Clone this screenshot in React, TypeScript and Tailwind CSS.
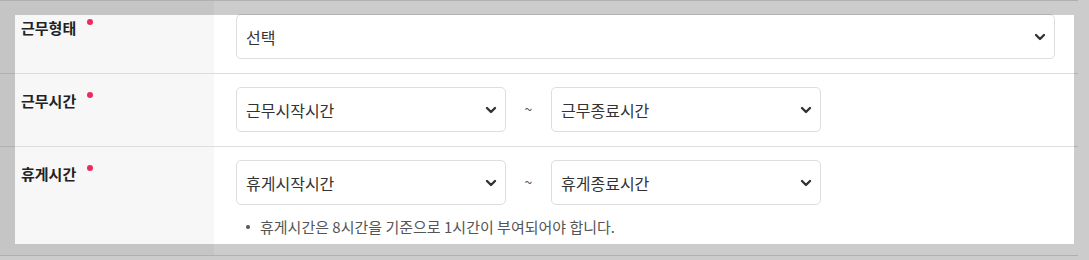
const font = "font-['Noto_Sans_CJK_KR','Noto_Sans',sans-serif]";

function Chevron() {
  return (
    <svg width="12" height="8" viewBox="0 0 12 8" className="shrink-0">
      <path d="M2 2 L6 6 L10 2" fill="none" stroke="#333" strokeWidth="2.4" strokeLinecap="round" strokeLinejoin="round" />
    </svg>
  );
}

function FakeSelect({ label, className }: { label: string; className: string }) {
  return (
    <div className={`h-[45px] flex items-center justify-between pl-[9px] pr-[8px] border border-[#dddddd] rounded-[5px] bg-white text-[16px] text-[#333] ${className}`}>
      <span>{label}</span>
      <Chevron />
    </div>
  );
}

function Label({ text }: { text: string }) {
  return (
    <div className="w-[214px] shrink-0 bg-[#f7f7f7] pl-[21px] pt-[16px]">
      <div className="flex items-start">
        <span className="text-[15px] leading-[22px] font-semibold text-[#222]">{text}</span>
        <span className="ml-[11px] mt-[2px] w-[6px] h-[6px] rounded-full bg-[#ee2a5c]" />
      </div>
    </div>
  );
}

function Range({ from, to }: { from: string; to: string }) {
  return (
    <div className="flex items-center">
      <FakeSelect label={from} className="w-[270px]" />
      <span className="w-[45px] text-center text-[14px] text-[#555]">~</span>
      <FakeSelect label={to} className="w-[270px]" />
    </div>
  );
}

export default function App() {
  return (
    <div className={`relative w-[1089px] h-[260px] bg-white overflow-hidden ${font}`}>
      <div className="w-[1078px] border-t border-[#dddddd]">
        <div className="flex border-b border-[#dddddd]">
          <Label text="근무형태" />
          <div className="flex-1 pl-[22px] pr-[23px] pt-[13px] pb-[14px]">
            <FakeSelect label="선택" className="w-full" />
          </div>
        </div>
        <div className="flex border-b border-[#dddddd]">
          <Label text="근무시간" />
          <div className="flex-1 pl-[22px] pt-[13px] pb-[14px]">
            <Range from="근무시작시간" to="근무종료시간" />
          </div>
        </div>
        <div className="flex border-b border-[#dddddd]">
          <Label text="휴게시간" />
          <div className="flex-1 pl-[22px] pt-[13px] pb-[18px]">
            <Range from="휴게시작시간" to="휴게종료시간" />
            <div className="mt-[12px] flex items-center pl-[10px] text-[15px] leading-[20px] text-[#555]">
              <span className="w-[4px] h-[4px] rounded-full bg-[#555] mr-[10px]" />
              <span>휴게시간은 8시간을 기준으로 1시간이 부여되어야 합니다.</span>
            </div>
          </div>
        </div>
      </div>
      {/* spotlight overlay */}
      <div className="absolute left-[15px] top-[15px] w-[1059px] h-[229px] pointer-events-none shadow-[0_0_0_2000px_rgba(0,0,0,0.2)]" />
    </div>
  );
}
